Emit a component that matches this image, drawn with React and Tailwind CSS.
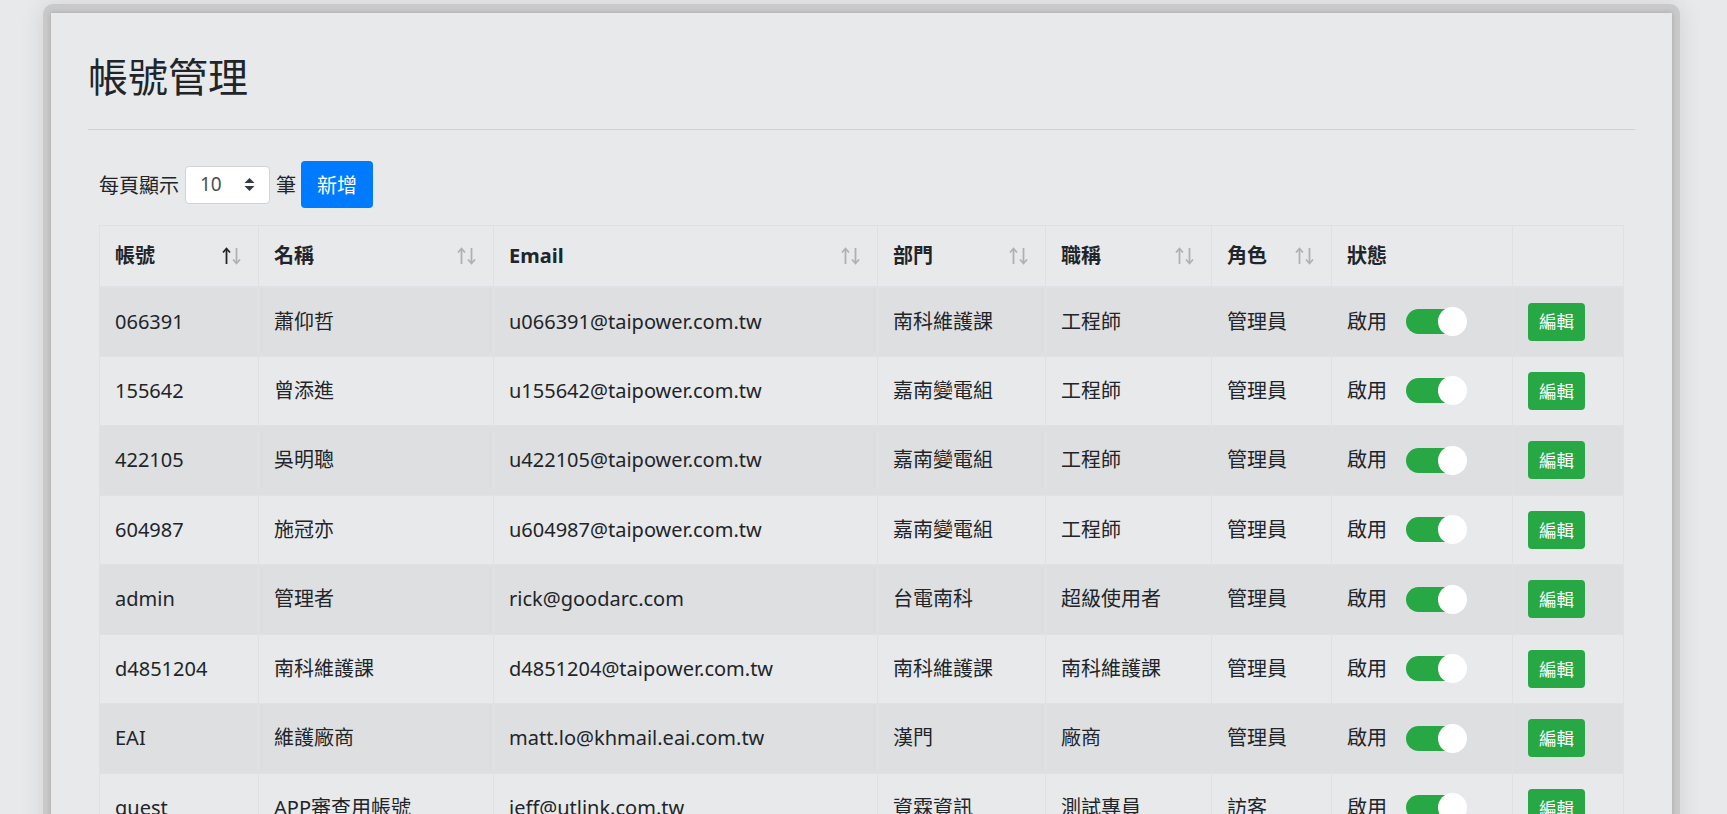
import React from "react";

const rows = [
  ["066391", "蕭仰哲", "u066391@taipower.com.tw", "南科維護課", "工程師", "管理員"],
  ["155642", "曾添進", "u155642@taipower.com.tw", "嘉南變電組", "工程師", "管理員"],
  ["422105", "吳明聰", "u422105@taipower.com.tw", "嘉南變電組", "工程師", "管理員"],
  ["604987", "施冠亦", "u604987@taipower.com.tw", "嘉南變電組", "工程師", "管理員"],
  ["admin", "管理者", "rick@goodarc.com", "台電南科", "超級使用者", "管理員"],
  ["d4851204", "南科維護課", "d4851204@taipower.com.tw", "南科維護課", "南科維護課", "管理員"],
  ["EAI", "維護廠商", "matt.lo@khmail.eai.com.tw", "漢門", "廠商", "管理員"],
  ["guest", "APP審查用帳號", "jeff@utlink.com.tw", "資霖資訊", "測試專員", "訪客"],
];

function SortIcon({ active }) {
  return (
    <svg width="19" height="18" viewBox="0 0 19 18" className="shrink-0">
      <g stroke={active ? "#212529" : "#aeb0b2"} strokeWidth="1.8" fill="none" strokeLinecap="butt">
        <line x1="4.5" y1="2" x2="4.5" y2="17" />
        <polyline points="1,5.5 4.5,1.5 8,5.5" />
      </g>
      <g stroke="#aeb0b2" strokeWidth="1.8" fill="none">
        <line x1="14.5" y1="1" x2="14.5" y2="16" />
        <polyline points="11,12.5 14.5,16.5 18,12.5" />
      </g>
    </svg>
  );
}

function Th({ children, sort, active, className = "" }) {
  return (
    <th className={"h-[61px] border border-[#dee2e6] border-b-2 px-[15px] text-left align-middle font-bold " + className}>
      <div className="flex items-center justify-between pr-[2px]">
        <span>{children}</span>
        {sort && <SortIcon active={active} />}
      </div>
    </th>
  );
}

export default function App() {
  return (
    <div className="min-h-[814px] bg-[#e8e9eb] pt-[4px] font-['Noto_Sans','Noto_Sans_CJK_TC',sans-serif] text-[20px] leading-[1.5] text-[#212529]">
      <div className="ml-[43px] w-[1637px] rounded-t-[10px] bg-[#c9c9c9] px-[8px] pt-[9px] shadow-[0_0_24px_rgba(0,0,0,0.10)]">
        <div className="bg-[#e8e9eb] px-[37px] pt-[38px] pb-[40px] shadow-[0_0_5px_rgba(0,0,0,0.18)]">
          <h2 className="font-['Noto_Sans_CJK_TC',sans-serif] text-[40px] leading-[1.2] font-normal">帳號管理</h2>
          <hr className="mt-[30px] border-0 border-t border-[#d1d2d4]" />
          <div className="px-[11px]">
            <div className="mt-[31px] flex h-[47px] items-center">
              <span className="font-['Noto_Sans_CJK_TC',sans-serif]">每頁顯示</span>
              <div className="ml-[6px] flex h-[38px] w-[85px] items-center justify-between rounded-[4px] border border-[#ced4da] bg-white pl-[14px] pr-[14px] text-[19px] text-[#495057]">
                <span>10</span>
                <svg width="11" height="13" viewBox="0 0 11 13">
                  <polygon points="0.5,5 5.5,0 10.5,5" fill="#343a40" />
                  <polygon points="0.5,8 5.5,13 10.5,8" fill="#343a40" />
                </svg>
              </div>
              <span className="ml-[6px] font-['Noto_Sans_CJK_TC',sans-serif]">筆</span>
              <button className="ml-[5px] h-[47px] w-[72px] rounded-[4px] bg-[#007bff] font-['Noto_Sans_CJK_TC',sans-serif] text-white">新增</button>
            </div>
            <table className="mt-[17px] w-[1524px] table-fixed border-collapse">
              <colgroup>
                <col className="w-[159px]" />
                <col className="w-[235px]" />
                <col className="w-[384px]" />
                <col className="w-[168px]" />
                <col className="w-[166px]" />
                <col className="w-[120px]" />
                <col className="w-[181px]" />
                <col className="w-[111px]" />
              </colgroup>
              <thead>
                <tr>
                  <Th sort active>帳號</Th>
                  <Th sort>名稱</Th>
                  <Th sort>Email</Th>
                  <Th sort>部門</Th>
                  <Th sort>職稱</Th>
                  <Th sort>角色</Th>
                  <Th>狀態</Th>
                  <Th></Th>
                </tr>
              </thead>
              <tbody>
                {rows.map((r, i) => (
                  <tr key={i} className={i % 2 === 0 ? "bg-[#dedfe1]" : ""}>
                    {r.map((c, j) => (
                      <td key={j} className="h-[69.5px] border border-[#dee2e6] px-[15px] align-middle whitespace-nowrap">
                        {c}
                      </td>
                    ))}
                    <td className="border border-[#dee2e6] px-[15px] align-middle">
                      <div className="flex items-center">
                        <span>啟用</span>
                        <span className="relative ml-[19px] inline-block h-[25px] w-[58px] rounded-full bg-[#28a745]">
                          <span className="absolute right-[-3px] top-[-2px] h-[29px] w-[29px] rounded-full bg-white"></span>
                        </span>
                      </div>
                    </td>
                    <td className="border border-[#dee2e6] px-[15px] align-middle">
                      <button className="h-[38px] w-[57px] rounded-[4px] bg-[#28a745] text-[17.5px] text-white">編輯</button>
                    </td>
                  </tr>
                ))}
              </tbody>
            </table>
          </div>
        </div>
      </div>
    </div>
  );
}
